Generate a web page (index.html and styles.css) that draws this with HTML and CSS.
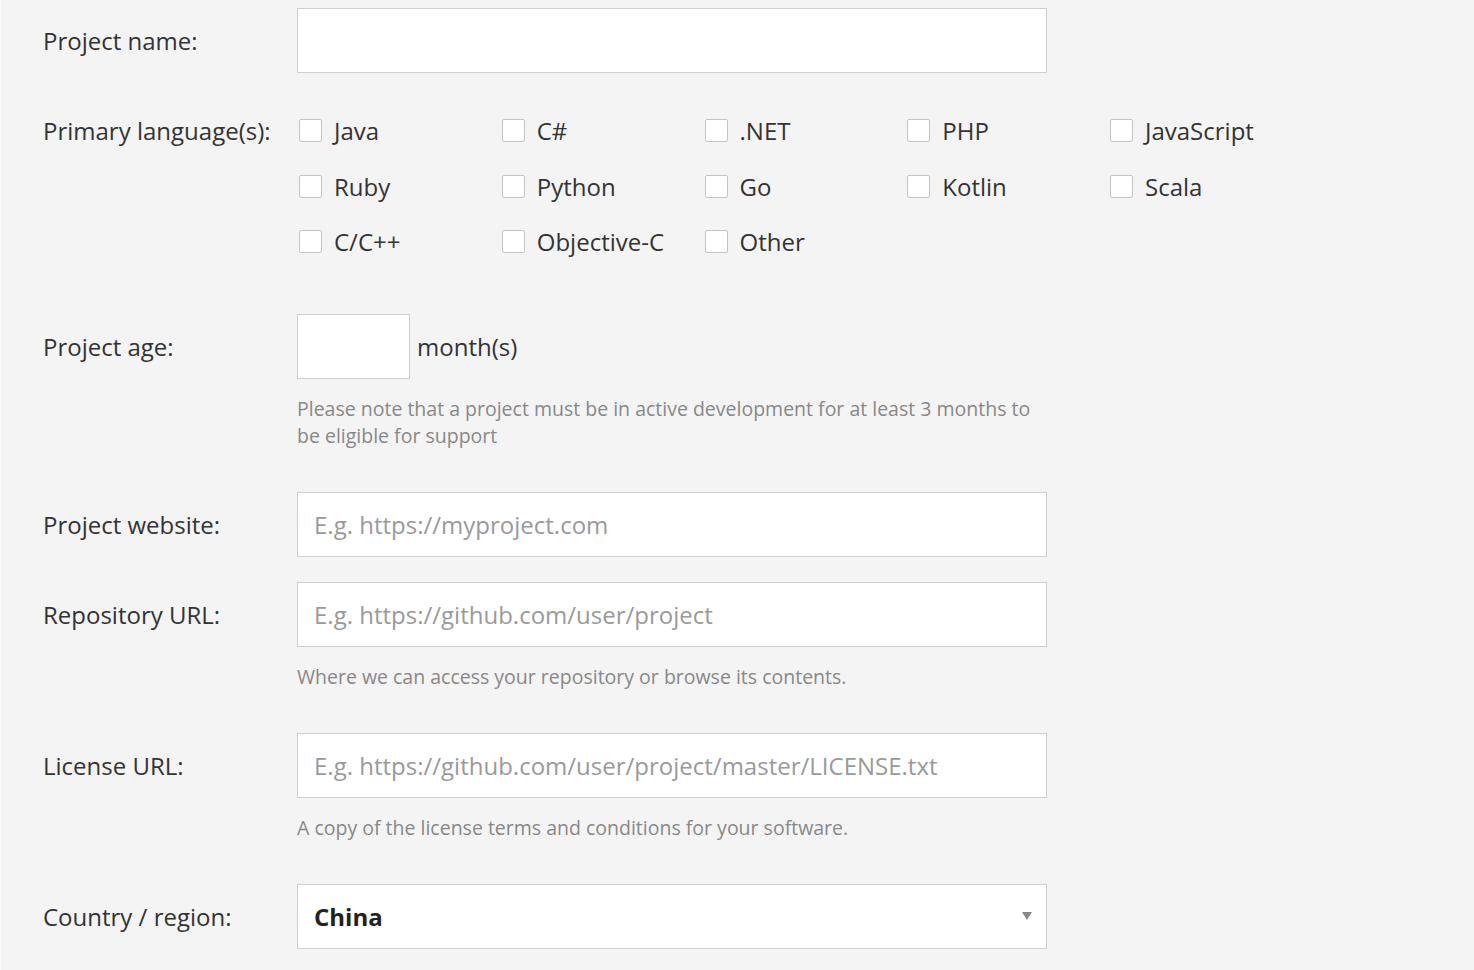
FILE: index.html
```html
<!DOCTYPE html>
<html lang="en">
<head>
<meta charset="utf-8">
<title>Project form</title>
<link rel="stylesheet" href="styles.css">
</head>
<body>
<form class="form">
  <div class="row">
    <label class="label">Project name:</label>
    <div class="field"><input class="input" type="text"></div>
  </div>

  <div class="row row-langs">
    <div class="label">Primary language(s):</div>
    <div class="langs">
      <label class="opt"><span class="box"></span>Java</label>
      <label class="opt"><span class="box"></span>C#</label>
      <label class="opt"><span class="box"></span>.NET</label>
      <label class="opt"><span class="box"></span>PHP</label>
      <label class="opt"><span class="box"></span>JavaScript</label>
      <label class="opt"><span class="box"></span>Ruby</label>
      <label class="opt"><span class="box"></span>Python</label>
      <label class="opt"><span class="box"></span>Go</label>
      <label class="opt"><span class="box"></span>Kotlin</label>
      <label class="opt"><span class="box"></span>Scala</label>
      <label class="opt"><span class="box"></span>C/C++</label>
      <label class="opt"><span class="box"></span>Objective-C</label>
      <label class="opt"><span class="box"></span>Other</label>
    </div>
  </div>

  <div class="row row-help">
    <label class="label">Project age:</label>
    <div class="field">
      <div class="age">
        <input class="input input-age" type="text">
        <span class="unit">month(s)</span>
      </div>
      <p class="help">Please note that a project must be in active development for at least 3 months to be eligible for support</p>
    </div>
  </div>

  <div class="row">
    <label class="label">Project website:</label>
    <div class="field"><input class="input" type="text" placeholder="E.g. https://myproject.com"></div>
  </div>

  <div class="row row-help">
    <label class="label">Repository URL:</label>
    <div class="field">
      <input class="input" type="text" placeholder="E.g. https://github.com/user/project">
      <p class="help">Where we can access your repository or browse its contents.</p>
    </div>
  </div>

  <div class="row row-help">
    <label class="label">License URL:</label>
    <div class="field">
      <input class="input" type="text" placeholder="E.g. https://github.com/user/project/master/LICENSE.txt">
      <p class="help">A copy of the license terms and conditions for your software.</p>
    </div>
  </div>

  <div class="row">
    <label class="label">Country / region:</label>
    <div class="field">
      <div class="select">
        <span class="select-value">China</span>
        <span class="caret"></span>
      </div>
    </div>
  </div>
</form>
</body>
</html>
```

FILE: styles.css
```css
html, body {
  margin: 0;
  padding: 0;
}
body {
  background: #f4f4f4;
  border-left: 1px solid #fafafa;
  font-family: "Open Sans", "Noto Sans", sans-serif;
  color: #333;
  height: 970px;
  overflow: hidden;
}
.form {
  padding: 8px 0 0 42px;
}
.row {
  display: flex;
  align-items: flex-start;
  margin-bottom: 25px;
}
.row-help {
  margin-bottom: 42.5px;
}
.row-langs {
  margin-bottom: 44px;
}
.label {
  flex: none;
  width: 254px;
  height: 65px;
  display: flex;
  align-items: center;
  font-size: 24px;
  color: #333;
}
.field {
  width: 750px;
  flex: none;
}
.input {
  display: block;
  box-sizing: border-box;
  width: 750px;
  height: 65px;
  margin: 0;
  padding: 0 16px;
  border: 1px solid #cfcfcf;
  background: #fff;
  font-family: "Open Sans", "Noto Sans", sans-serif;
  font-size: 24px;
  color: #333;
  outline: none;
}
.input::placeholder {
  color: #9a9a9a;
}
.age {
  display: flex;
  align-items: center;
}
.input-age {
  width: 113px;
}
.unit {
  margin-left: 7px;
  font-size: 24px;
  color: #333;
}
.help {
  margin: 16.5px 0 0;
  font-size: 19.5px;
  line-height: 27px;
  color: #888;
}
.langs {
  display: grid;
  grid-template-columns: repeat(5, 202.75px);
  grid-auto-rows: 55.5px;
  padding-top: 5px;
}
.opt {
  display: flex;
  align-items: center;
  font-size: 24px;
  color: #333;
  white-space: nowrap;
}
.box {
  flex: none;
  box-sizing: border-box;
  width: 23px;
  height: 23px;
  margin: 0 12px 0 2px;
  border: 1px solid #c4c4c4;
  border-radius: 2px;
  background: #fff;
}
.select {
  box-sizing: border-box;
  width: 750px;
  height: 65px;
  border: 1px solid #cfcfcf;
  background: #fff;
  display: flex;
  align-items: center;
  justify-content: space-between;
  padding: 0 14px 0 16px;
}
.select-value {
  font-size: 24px;
  font-weight: 700;
  color: #222;
}
.caret {
  width: 0;
  height: 0;
  border-left: 5px solid transparent;
  border-right: 5px solid transparent;
  border-top: 8px solid #888;
}
```
